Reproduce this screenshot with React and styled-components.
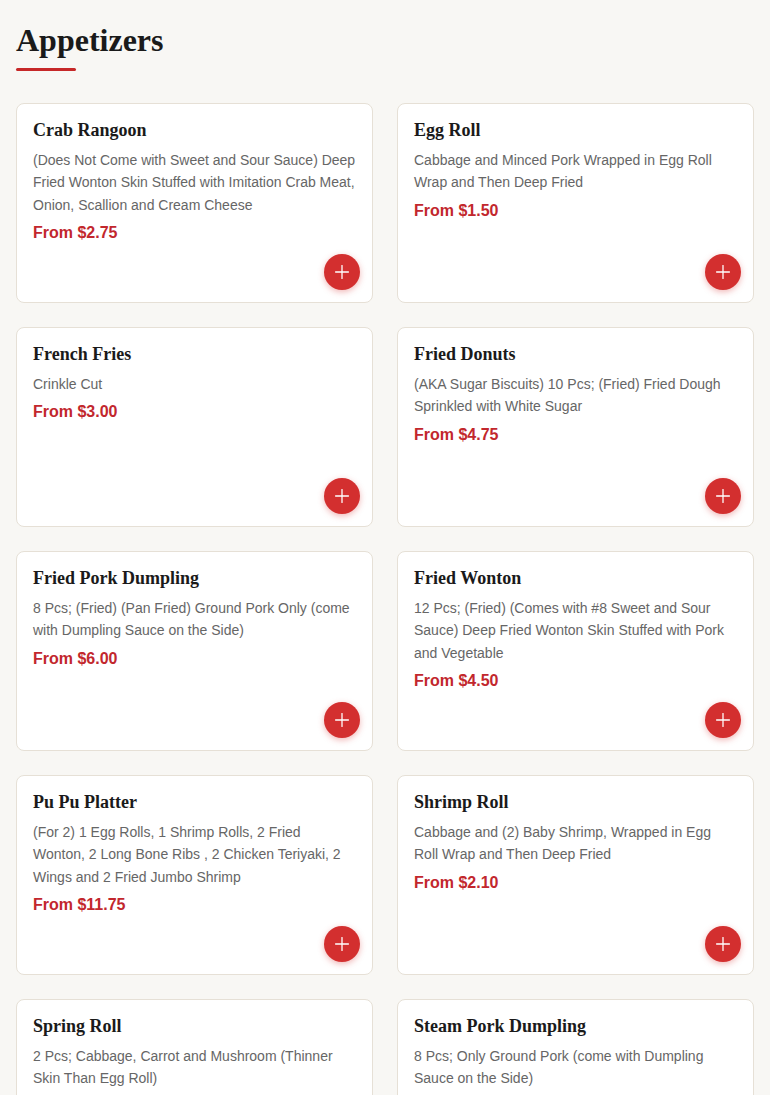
import React from 'react';
import styled, { createGlobalStyle } from 'styled-components';
import { Plus } from 'lucide-react';

const items = [
  {
    name: 'Crab Rangoon',
    desc: '(Does Not Come with Sweet and Sour Sauce) Deep Fried Wonton Skin Stuffed with Imitation Crab Meat, Onion, Scallion and Cream Cheese',
    price: 'From $2.75',
  },
  {
    name: 'Egg Roll',
    desc: 'Cabbage and Minced Pork Wrapped in Egg Roll Wrap and Then Deep Fried',
    price: 'From $1.50',
  },
  { name: 'French Fries', desc: 'Crinkle Cut', price: 'From $3.00' },
  {
    name: 'Fried Donuts',
    desc: '(AKA Sugar Biscuits) 10 Pcs; (Fried) Fried Dough Sprinkled with White Sugar',
    price: 'From $4.75',
  },
  {
    name: 'Fried Pork Dumpling',
    desc: '8 Pcs; (Fried) (Pan Fried) Ground Pork Only (come with Dumpling Sauce on the Side)',
    price: 'From $6.00',
  },
  {
    name: 'Fried Wonton',
    desc: '12 Pcs; (Fried) (Comes with #8 Sweet and Sour Sauce) Deep Fried Wonton Skin Stuffed with Pork and Vegetable',
    price: 'From $4.50',
  },
  {
    name: 'Pu Pu Platter',
    desc: '(For 2) 1 Egg Rolls, 1 Shrimp Rolls, 2 Fried Wonton, 2 Long Bone Ribs , 2 Chicken Teriyaki, 2 Wings and 2 Fried Jumbo Shrimp',
    price: 'From $11.75',
  },
  {
    name: 'Shrimp Roll',
    desc: 'Cabbage and (2) Baby Shrimp, Wrapped in Egg Roll Wrap and Then Deep Fried',
    price: 'From $2.10',
  },
  {
    name: 'Spring Roll',
    desc: '2 Pcs; Cabbage, Carrot and Mushroom (Thinner Skin Than Egg Roll)',
    price: 'From $3.50',
  },
  {
    name: 'Steam Pork Dumpling',
    desc: '8 Pcs; Only Ground Pork (come with Dumpling Sauce on the Side)',
    price: 'From $6.00',
  },
];

export default function App() {
  return (
    <Page>
      <GlobalStyle />
      <Heading>Appetizers</Heading>
      <Underline />
      <Grid>
        {items.map((item) => (
          <Card key={item.name}>
            <Name>{item.name}</Name>
            <Desc>{item.desc}</Desc>
            <Price>{item.price}</Price>
            <AddButton aria-label={`Add ${item.name}`}>
              <Plus size={22} strokeWidth={1.4} />
            </AddButton>
          </Card>
        ))}
      </Grid>
    </Page>
  );
}

const GlobalStyle = createGlobalStyle`
  * {
    box-sizing: border-box;
  }
  body {
    margin: 0;
    background: #f8f7f4;
    font-family: 'Liberation Sans', Arial, sans-serif;
  }
`;

const Page = styled.main`
  padding: 21px 16px 24px;
`;

const Heading = styled.h2`
  margin: 0;
  font-family: 'Liberation Serif', 'Times New Roman', serif;
  font-size: 32px;
  font-weight: 700;
  line-height: 1.2;
  color: #1a1a1a;
`;

const Underline = styled.div`
  width: 60px;
  height: 3px;
  margin-top: 9px;
  border-radius: 2px;
  background: #c62828;
`;

const Grid = styled.div`
  display: grid;
  grid-template-columns: 1fr 1fr;
  gap: 24px;
  margin-top: 32px;
`;

const Card = styled.div`
  position: relative;
  min-height: 200px;
  padding: 16px;
  background: #fff;
  border: 1px solid #e6e0d6;
  border-radius: 8px;
`;

const Name = styled.h3`
  margin: 0 0 7px;
  font-family: 'Liberation Serif', 'Times New Roman', serif;
  font-size: 18px;
  font-weight: 700;
  line-height: 1.2;
  color: #1a1a1a;
`;

const Desc = styled.p`
  margin: 0 0 8px;
  font-size: 14px;
  line-height: 1.6;
  color: #666;
`;

const Price = styled.div`
  font-size: 16px;
  font-weight: 700;
  color: #c2272d;
`;

const AddButton = styled.button`
  position: absolute;
  right: 12px;
  bottom: 12px;
  width: 36px;
  height: 36px;
  padding: 0;
  border: none;
  border-radius: 50%;
  display: flex;
  align-items: center;
  justify-content: center;
  background: #d32f2f;
  color: #fff;
  box-shadow: 0 2px 6px rgba(211, 47, 47, 0.35);
  cursor: pointer;
`;
